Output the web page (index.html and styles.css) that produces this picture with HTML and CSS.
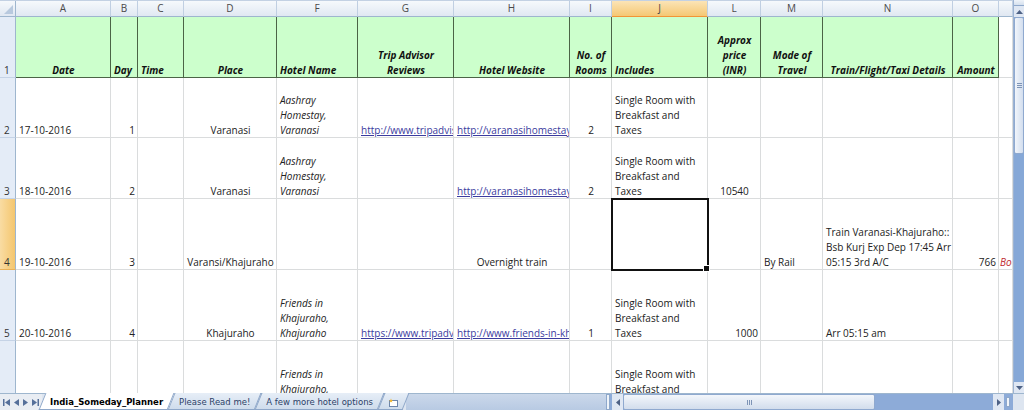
FILE: index.html
```html
<!DOCTYPE html>
<html lang="en">
<head>
    <meta charset="UTF-8">
    <title>India_Someday_Planner</title>
    <link rel="stylesheet" href="styles.css">
</head>
<body>
<div class="window">
    <div class="workbook">
        <div class="sheet">
            <!-- column headers -->
            <div class="ch corner"><span class="tri"></span></div>
            <div class="ch">A</div>
            <div class="ch">B</div>
            <div class="ch">C</div>
            <div class="ch">D</div>
            <div class="ch">F</div>
            <div class="ch">G</div>
            <div class="ch">H</div>
            <div class="ch">I</div>
            <div class="ch on">J</div>
            <div class="ch">L</div>
            <div class="ch">M</div>
            <div class="ch">N</div>
            <div class="ch">O</div>
            <div class="ch"></div>

            <!-- row 1 -->
            <div class="rh">1</div>
            <div class="c hd ctr"><span>Date</span></div>
            <div class="c hd"><span>Day</span></div>
            <div class="c hd"><span>Time</span></div>
            <div class="c hd ctr"><span>Place</span></div>
            <div class="c hd"><span>Hotel Name</span></div>
            <div class="c hd ctr"><span>Trip Advisor<br>Reviews</span></div>
            <div class="c hd ctr"><span>Hotel Website</span></div>
            <div class="c hd ctr"><span>No. of<br>Rooms</span></div>
            <div class="c hd"><span>Includes</span></div>
            <div class="c hd ctr"><span>Approx<br>price<br>(INR)</span></div>
            <div class="c hd ctr"><span>Mode of<br>Travel</span></div>
            <div class="c hd ctr"><span>Train/Flight/Taxi Details</span></div>
            <div class="c hd ctr"><span>Amount</span></div>
            <div class="c"></div>

            <!-- row 2 -->
            <div class="rh">2</div>
            <div class="c"><span>17-10-2016</span></div>
            <div class="c rt"><span>1</span></div>
            <div class="c"></div>
            <div class="c ctr"><span>Varanasi</span></div>
            <div class="c it"><span>Aashray<br>Homestay,<br>Varanasi</span></div>
            <div class="c"><span class="lnk">http://www.tripadvisor.in</span></div>
            <div class="c"><span class="lnk">http://varanasihomestay.com</span></div>
            <div class="c ctr"><span>2</span></div>
            <div class="c"><span>Single Room with<br>Breakfast and<br>Taxes</span></div>
            <div class="c"></div>
            <div class="c"></div>
            <div class="c"></div>
            <div class="c"></div>
            <div class="c"></div>

            <!-- row 3 -->
            <div class="rh">3</div>
            <div class="c"><span>18-10-2016</span></div>
            <div class="c rt"><span>2</span></div>
            <div class="c"></div>
            <div class="c ctr"><span>Varanasi</span></div>
            <div class="c it"><span>Aashray<br>Homestay,<br>Varanasi</span></div>
            <div class="c"></div>
            <div class="c"><span class="lnk">http://varanasihomestay.com</span></div>
            <div class="c ctr"><span>2</span></div>
            <div class="c"><span>Single Room with<br>Breakfast and<br>Taxes</span></div>
            <div class="c ctr"><span>10540</span></div>
            <div class="c"></div>
            <div class="c"></div>
            <div class="c"></div>
            <div class="c"></div>

            <!-- row 4 -->
            <div class="rh on">4</div>
            <div class="c"><span>19-10-2016</span></div>
            <div class="c rt"><span>3</span></div>
            <div class="c"></div>
            <div class="c ctr"><span>Varansi/Khajuraho</span></div>
            <div class="c"></div>
            <div class="c"></div>
            <div class="c ctr"><span>Overnight train</span></div>
            <div class="c"></div>
            <div class="c sel"></div>
            <div class="c"></div>
            <div class="c"><span>By Rail</span></div>
            <div class="c"><span>Train Varanasi-Khajuraho::<br>Bsb Kurj Exp Dep 17:45 Arr<br>05:15 3rd A/C</span></div>
            <div class="c rt"><span>766</span></div>
            <div class="c it note"><span>Booked</span></div>

            <!-- row 5 -->
            <div class="rh">5</div>
            <div class="c"><span>20-10-2016</span></div>
            <div class="c rt"><span>4</span></div>
            <div class="c"></div>
            <div class="c ctr"><span>Khajuraho</span></div>
            <div class="c it"><span>Friends in<br>Khajuraho,<br>Khajuraho</span></div>
            <div class="c"><span class="lnk">https://www.tripadvisor.in</span></div>
            <div class="c"><span class="lnk">http://www.friends-in-khajuraho.com</span></div>
            <div class="c ctr"><span>1</span></div>
            <div class="c"><span>Single Room with<br>Breakfast and<br>Taxes</span></div>
            <div class="c rt"><span>1000</span></div>
            <div class="c"></div>
            <div class="c"><span>Arr 05:15 am</span></div>
            <div class="c"></div>
            <div class="c"></div>

            <!-- row 6 -->
            <div class="rh">6</div>
            <div class="c"></div>
            <div class="c"></div>
            <div class="c"></div>
            <div class="c"></div>
            <div class="c it"><span>Friends in<br>Khajuraho,<br>Khajuraho</span></div>
            <div class="c"></div>
            <div class="c"></div>
            <div class="c"></div>
            <div class="c"><span>Single Room with<br>Breakfast and<br>Taxes</span></div>
            <div class="c"></div>
            <div class="c"></div>
            <div class="c"></div>
            <div class="c"></div>
            <div class="c"></div>
        </div>

        <div class="vscroll">
            <div class="vs-split"></div>
            <div class="vs-btn">
                <svg width="7" height="4" viewBox="0 0 7 4"><path d="M0 4 L3.5 0 L7 4 Z" fill="#4d6185"/></svg>
            </div>
            <div class="vs-thumb"><span class="grip-h"></span></div>
            <div class="vs-track"></div>
            <div class="vs-btn">
                <svg width="7" height="4" viewBox="0 0 7 4"><path d="M0 0 L3.5 4 L7 0 Z" fill="#4d6185"/></svg>
            </div>
        </div>
    </div>

    <div class="tabbar">
        <div class="nav">
            <svg width="7" height="7" viewBox="0 0 7 7"><rect x="0" y="0" width="1.5" height="7" fill="#56709a"/><path d="M7 0 L2 3.5 L7 7 Z" fill="#56709a"/></svg>
            <svg width="5" height="7" viewBox="0 0 5 7"><path d="M5 0 L0 3.5 L5 7 Z" fill="#56709a"/></svg>
            <svg width="5" height="7" viewBox="0 0 5 7"><path d="M0 0 L5 3.5 L0 7 Z" fill="#56709a"/></svg>
            <svg width="7" height="7" viewBox="0 0 7 7"><path d="M0 0 L5 3.5 L0 7 Z" fill="#56709a"/><rect x="5.5" y="0" width="1.5" height="7" fill="#56709a"/></svg>
        </div>
        <div class="tabs">
            <div class="tab active">India_Someday_Planner</div>
            <div class="tab">Please Read me!</div>
            <div class="tab">A few more hotel options</div>
            <div class="tab new">
                <svg width="11" height="9" viewBox="0 0 11 9">
                    <rect x="1.5" y="2.5" width="8" height="6" fill="#fff" stroke="#6d86ab"/>
                    <path d="M3 0.5 L3.6 2 L5 2.2 L3.9 3.1 L4.3 4.5 L3 3.7 L1.7 4.5 L2.1 3.1 L1 2.2 L2.4 2 Z" fill="#f2b632"/>
                </svg>
            </div>
        </div>
        <div class="fill"></div>
        <div class="hscroll">
            <div class="hs-split"></div>
            <div class="hs-btn">
                <svg width="4" height="7" viewBox="0 0 4 7"><path d="M4 0 L0 3.5 L4 7 Z" fill="#4d6185"/></svg>
            </div>
            <div class="hs-thumb"><span class="grip-v"></span></div>
            <div class="hs-track"></div>
            <div class="hs-btn">
                <svg width="4" height="7" viewBox="0 0 4 7"><path d="M0 0 L4 3.5 L0 7 Z" fill="#4d6185"/></svg>
            </div>
            <div class="hs-box"></div>
        </div>
        <div class="corner-box"></div>
    </div>
</div>
</body>
</html>
```

FILE: styles.css
```css
* {
    margin: 0;
    padding: 0;
    box-sizing: border-box;
}

body {
    width: 1024px;
    height: 410px;
    overflow: hidden;
    background-color: #fff;
    color: #222;
    font-family: 'Open Sans', 'Liberation Sans', sans-serif;
    font-size: 10px;
}

.window {
    display: flex;
    flex-direction: column;
    height: 410px;
}

.workbook {
    display: flex;
    height: 393px;
}

/* grid of cells */
.sheet {
    flex: 0 0 1013px;
    display: grid;
    grid-template-columns: 16px 95px 27px 46px 93px 81px 96px 116px 42px 96px 53px 62px 130px 46px 14px;
    grid-template-rows: 16px 61px 60px 61px 71px 71px 71px;
    overflow: hidden;
    border-top: 1px solid #c3d1e3;
}

.ch {
    background: linear-gradient(#f6f9fc, #e0e8f2);
    border-right: 1px solid #c0cfe2;
    border-bottom: 1px solid #9eb6ce;
    color: #4a4a4a;
    text-align: center;
    line-height: 15px;
    font-size: 10px;
}

.ch.on {
    background: linear-gradient(#fbe4b6, #f5c874);
    border-bottom-color: #f29436;
}

.corner {
    position: relative;
    border-right-color: #9eb6ce;
}

.tri {
    position: absolute;
    right: 2px;
    bottom: 2px;
    width: 0;
    height: 0;
    border-left: 9px solid transparent;
    border-bottom: 9px solid #b8c9de;
}

.rh {
    display: flex;
    align-items: flex-end;
    padding: 0 0 0 4px;
    background-color: #e4ecf7;
    border-right: 1px solid #9eb6ce;
    border-bottom: 1px solid #c5d3e6;
    color: #333;
    line-height: 14px;
}

.rh.on {
    background: linear-gradient(90deg, #f9dca3, #f4c66e);
    border-bottom-color: #e9b25a;
}

.c {
    display: flex;
    flex-direction: column;
    justify-content: flex-end;
    padding: 0 2px 0 3px;
    border-right: 1px solid #dadcdd;
    border-bottom: 1px solid #dadcdd;
    white-space: nowrap;
    overflow: hidden;
    line-height: 15px;
}

.c span {
    margin-bottom: -1px;
}

.ctr {
    text-align: center;
}

.rt {
    text-align: right;
}

.it {
    font-style: italic;
}

.hd {
    background-color: #ccffcc;
    border-right-color: #4b6446;
    border-bottom-color: #4b6446;
    font-weight: bold;
    font-style: italic;
    color: #111;
}

.lnk {
    color: #3b3b9e;
    text-decoration: underline;
}

.note {
    color: #c0272d;
    padding-left: 1px;
}

.sel {
    position: relative;
    z-index: 2;
    overflow: visible;
    outline: 2px solid #111;
    outline-offset: -1px;
}

.sel::after {
    content: "";
    position: absolute;
    right: -3px;
    bottom: -3px;
    width: 5px;
    height: 5px;
    background-color: #111;
    border: 1px solid #fff;
}

/* vertical scrollbar */
.vscroll {
    flex: 0 0 11px;
    display: flex;
    flex-direction: column;
    background-color: #86a8d7;
    border-left: 1px solid #9cb3d3;
}

.vs-split {
    height: 6px;
    background: linear-gradient(#eef3f9, #d5e0ee);
    border-bottom: 1px solid #8ea8cb;
}

.vs-btn {
    height: 11px;
    display: flex;
    align-items: center;
    justify-content: center;
    background-color: #dfe7f3;
}

.vs-thumb {
    height: 137px;
    display: flex;
    align-items: center;
    justify-content: center;
    background: linear-gradient(90deg, #f1f5fb, #d3deee);
    border: 1px solid #8fa9cf;
    border-radius: 2px;
}

.grip-h {
    width: 5px;
    height: 5px;
    border-top: 1px solid #7e94b6;
    border-bottom: 1px solid #7e94b6;
    background: linear-gradient(#7e94b6, #7e94b6) center / 100% 1px no-repeat;
}

.vs-track {
    flex: 1;
}

/* sheet tabs + horizontal scrollbar */
.tabbar {
    display: flex;
    height: 17px;
    background-color: #dde5f0;
    border-top: 1px solid #9eb6ce;
    font-family: 'DejaVu Sans', 'Liberation Sans', sans-serif;
    font-size: 8.5px;
}

.nav {
    flex: 0 0 42px;
    display: flex;
    align-items: center;
    gap: 4px;
    padding-left: 3px;
    background-color: #e9edf3;
}

.tabs {
    display: flex;
}

.tab {
    position: relative;
    z-index: 0;
    display: flex;
    align-items: center;
    padding: 0 8px;
    color: #2c4167;
}

.tab::before {
    content: "";
    position: absolute;
    inset: -1px 0 0 0;
    z-index: -1;
    background: linear-gradient(#e7eef7, #cfdcec);
    border: 1px solid #8ea7c9;
    border-top: none;
    transform: skewX(-22deg);
}

.tab.active {
    z-index: 1;
    font-weight: bold;
    color: #000;
}

.tab.active::before {
    background: #fff;
}

.tab.new {
    padding: 0 7px;
}

.fill {
    flex: 1;
    background: linear-gradient(#cbd8ea, #b8cae3);
}

.hscroll {
    flex: 0 0 407px;
    display: flex;
    align-items: stretch;
    background-color: #8dabd8;
}

.hs-split {
    width: 4px;
    margin-right: 2px;
    background-color: #eef3f9;
    border: 1px solid #8ea8cb;
}

.hs-btn {
    width: 11px;
    display: flex;
    align-items: center;
    justify-content: center;
    background-color: #dfe7f3;
}

.hs-thumb {
    width: 252px;
    display: flex;
    align-items: center;
    justify-content: center;
    background: linear-gradient(#f3f6fb, #d2ddec);
    border: 1px solid #8fa9cf;
    border-radius: 2px;
}

.grip-v {
    width: 5px;
    height: 5px;
    border-left: 1px solid #7e94b6;
    border-right: 1px solid #7e94b6;
    background: linear-gradient(#7e94b6, #7e94b6) center / 1px 100% no-repeat;
}

.hs-track {
    flex: 1;
}

.hs-box {
    width: 4px;
    margin: 3px 3px 3px 2px;
    background-color: #f2f5fa;
    border: 1px solid #8ea8cb;
}

.corner-box {
    flex: 0 0 11px;
    background-color: #dde5f0;
}
```
